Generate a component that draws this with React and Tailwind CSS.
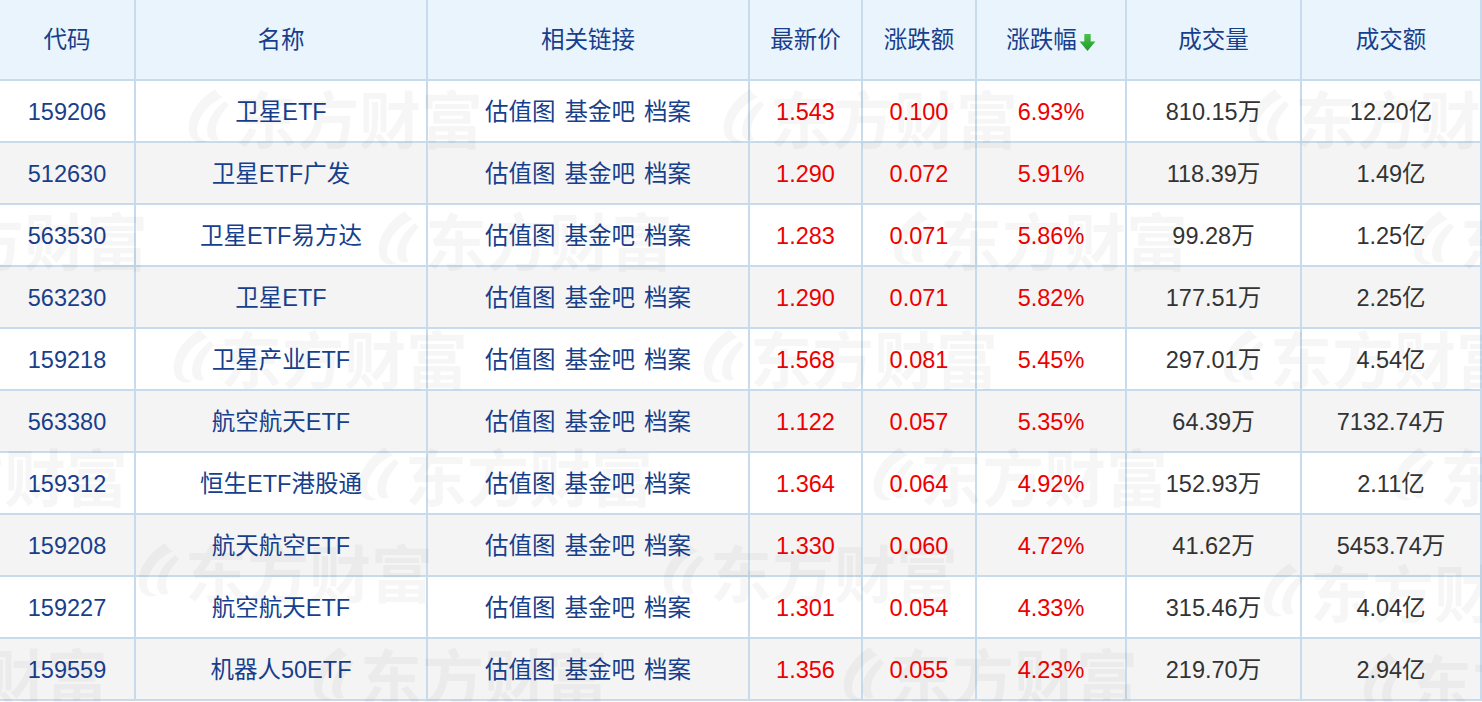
import React from 'react';

const rows = [
  ['159206', '卫星ETF', '1.543', '0.100', '6.93%', '810.15万', '12.20亿'],
  ['512630', '卫星ETF广发', '1.290', '0.072', '5.91%', '118.39万', '1.49亿'],
  ['563530', '卫星ETF易方达', '1.283', '0.071', '5.86%', '99.28万', '1.25亿'],
  ['563230', '卫星ETF', '1.290', '0.071', '5.82%', '177.51万', '2.25亿'],
  ['159218', '卫星产业ETF', '1.568', '0.081', '5.45%', '297.01万', '4.54亿'],
  ['563380', '航空航天ETF', '1.122', '0.057', '5.35%', '64.39万', '7132.74万'],
  ['159312', '恒生ETF港股通', '1.364', '0.064', '4.92%', '152.93万', '2.11亿'],
  ['159208', '航天航空ETF', '1.330', '0.060', '4.72%', '41.62万', '5453.74万'],
  ['159227', '航空航天ETF', '1.301', '0.054', '4.33%', '315.46万', '4.04亿'],
  ['159559', '机器人50ETF', '1.356', '0.055', '4.23%', '219.70万', '2.94亿'],
];

const widths = [135, 292, 322, 113, 114, 150, 175, 180];

// watermark tiles: [left, top]
const marks = [
  [185, 86], [720, 86], [1245, 86],
  [-150, 208], [375, 208], [890, 208], [1410, 208],
  [170, 326], [700, 326], [1220, 326],
  [-170, 444], [355, 444], [870, 444], [1390, 444],
  [135, 540], [660, 540], [1260, 560],
  [-190, 644], [310, 644], [840, 644], [1360, 650],
];

function Logo() {
  return (
    <svg width="46" height="60" viewBox="0 0 46 60" className="shrink-0">
      <path d="M30 2 C14 12 2 28 4 44 C5 54 14 58 22 54 C12 52 10 44 14 34 C18 24 26 16 38 10 C34 8 32 6 30 2 Z" fill="currentColor" />
      <path d="M40 14 C30 22 22 32 22 44 C22 52 28 56 34 52 C30 48 30 40 34 32 C37 26 41 22 44 18 Z" fill="currentColor" />
    </svg>
  );
}

function Watermark({ x, y }) {
  return (
    <div
      className="absolute flex items-center gap-1 text-black/[0.035] font-bold text-[62px] leading-none whitespace-nowrap"
      style={{ left: x, top: y, fontFamily: '"Noto Sans CJK SC", sans-serif' }}
    >
      <Logo />
      <span>东方财富</span>
    </div>
  );
}

function SortArrow() {
  return (
    <svg width="17" height="19" viewBox="0 0 16 18" className="ml-[2px] mt-[2px]">
      <defs>
        <linearGradient id="g" x1="0" y1="0" x2="0" y2="1">
          <stop offset="0" stopColor="#4cc04c" />
          <stop offset="1" stopColor="#1f9a2a" />
        </linearGradient>
      </defs>
      <path d="M5 1 H11 V8 H15.5 L8 17 L0.5 8 H5 Z" fill="url(#g)" />
    </svg>
  );
}

export default function App() {
  const headers = ['代码', '名称', '相关链接', '最新价', '涨跌额', '涨跌幅', '成交量', '成交额'];
  const cell = 'border-2 border-[#c7dbec] text-center pt-[3px]';

  return (
    <div
      className="relative w-[1482px] h-[702px] overflow-hidden bg-white"
      style={{ fontFamily: '"Liberation Sans", "Noto Sans CJK SC", sans-serif' }}
    >
      <table className="border-collapse table-fixed w-[1482px] text-[23.5px]">
        <colgroup>
          {widths.map((w, i) => (
            <col key={i} style={{ width: w }} />
          ))}
        </colgroup>
        <thead>
          <tr className="h-[80px] bg-[#eaf4fd]">
            {headers.map((h, i) => (
              <th key={h} className="border-2 border-t-0 border-[#c7dbec] pt-[3px] font-normal text-[#173f8c] text-center align-middle first:border-l-0">
                {i === 5 ? (
                  <span className="inline-flex items-center">
                    {h}
                    <SortArrow />
                  </span>
                ) : (
                  h
                )}
              </th>
            ))}
          </tr>
        </thead>
        <tbody>
          {rows.map((r, i) => (
            <tr key={i} className={i % 2 === 1 ? 'h-[62px] bg-[#f4f4f4]' : 'h-[62px] bg-white'}>
              <td className={`${cell} border-l-0 text-[#173f8c]`}>{r[0]}</td>
              <td className={`${cell} text-[#173f8c]`}>{r[1]}</td>
              <td className={`${cell} text-[#173f8c]`}>
                <span className="inline-flex gap-[9px]">
                  <span>估值图</span>
                  <span>基金吧</span>
                  <span>档案</span>
                </span>
              </td>
              <td className={`${cell} text-[#ee0000]`}>{r[2]}</td>
              <td className={`${cell} text-[#ee0000]`}>{r[3]}</td>
              <td className={`${cell} text-[#ee0000]`}>{r[4]}</td>
              <td className={`${cell} text-[#333333]`}>{r[5]}</td>
              <td className={`${cell} text-[#333333]`}>{r[6]}</td>
            </tr>
          ))}
        </tbody>
      </table>

      <div className="pointer-events-none absolute inset-0 top-[80px]">
        {marks.map(([x, y], i) => (
          <Watermark key={i} x={x} y={y - 80} />
        ))}
      </div>
    </div>
  );
}
